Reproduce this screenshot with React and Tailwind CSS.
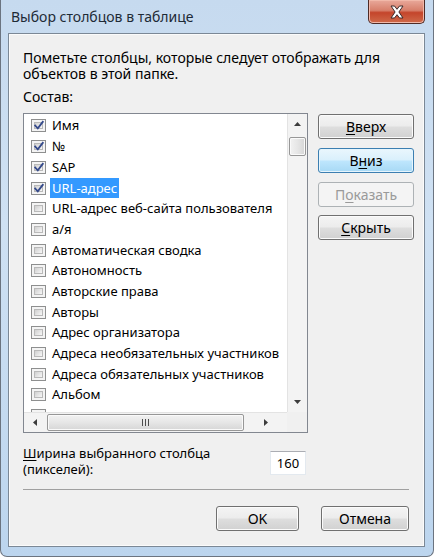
import React from 'react'

const items = [
  { label: 'Имя', checked: true },
  { label: '№', checked: true },
  { label: 'SAP', checked: true },
  { label: 'URL-адрес', checked: true, selected: true },
  { label: 'URL-адрес веб-сайта пользователя' },
  { label: 'а/я' },
  { label: 'Автоматическая сводка' },
  { label: 'Автономность' },
  { label: 'Авторские права' },
  { label: 'Авторы' },
  { label: 'Адрес организатора' },
  { label: 'Адреса необязательных участников' },
  { label: 'Адреса обязательных участников' },
  { label: 'Альбом' },
  { label: '' },
]

const CheckBox = ({ checked }) => (
  <div className="relative w-[15px] h-[13px] shrink-0 border border-[#8e8f8f] bg-[#f4f4f4] p-[2px]">
    <div className="w-full h-full border border-[#b9b9b9] bg-[linear-gradient(135deg,#d0d0d0,#f7f7f7)]" />
    {checked && (
      <svg className="absolute left-[1px] top-[0px]" width="12" height="11" viewBox="0 0 12 11">
        <path d="M2.2 5.5 L4.8 8.4 L9.8 1.8" fill="none" stroke="#34498a" strokeWidth="1.8" strokeLinecap="square" />
      </svg>
    )}
  </div>
)

const Arrow = ({ dir }) => {
  const d = {
    up: 'M0 4 L3.5 0 L7 4 Z',
    down: 'M0 0 L3.5 4 L7 0 Z',
    left: 'M4 0 L0 3.5 L4 7 Z',
    right: 'M0 0 L4 3.5 L0 7 Z',
  }[dir]
  const vertical = dir === 'up' || dir === 'down'
  return (
    <svg width={vertical ? 7 : 4} height={vertical ? 4 : 7} viewBox={vertical ? '0 0 7 4' : '0 0 4 7'}>
      <path d={d} fill="#3c3c3c" />
    </svg>
  )
}

const Button = ({ children, kind = 'normal', className = '' }) => {
  const styles = {
    normal:
      'border-[#707070] text-black bg-[linear-gradient(to_bottom,#f4f4f4_0%,#ececec_48%,#dedede_52%,#d1d1d1_100%)] shadow-[inset_0_0_0_1px_#fbfbfb]',
    focus:
      'border-[#3c7fb1] text-black bg-[linear-gradient(to_bottom,#eaf6fd_0%,#d9f0fc_48%,#bee6fd_52%,#a7d9f5_100%)] shadow-[inset_0_0_0_1px_#e6f5fd]',
    disabled: 'border-[#adb2b5] text-[#9a9a9a] bg-[#f4f4f4]',
  }[kind]
  return (
    <div className={`h-[25px] rounded-[3px] border flex items-center justify-center text-[14px] leading-none ${styles} ${className}`}>
      {children}
    </div>
  )
}

export default function App() {
  return (
    <div className="w-[434px] h-[557px] overflow-hidden flex flex-col rounded-b-[7px] border-x border-b border-[#6b7480] bg-[linear-gradient(to_bottom,#c6daef,#cfe1f3_40%,#bcd5ee)] font-['Noto_Sans',sans-serif] text-black">
      {/* Title bar */}
      <div className="h-[33px] flex justify-between items-start pl-[10px] pr-[8px] shrink-0">
        <div className="mt-[9px] text-[14px] leading-[16px] text-[#1e2a36]">Выбор столбцов в таблице</div>
        <div className="w-[57px] h-[24px] rounded-b-[5px] border border-t-0 border-[#4e2b26] flex items-center justify-center bg-[linear-gradient(to_bottom,#e9a99b_0%,#d77f6b_45%,#c4452b_55%,#cf6a4a_100%)] shadow-[inset_0_0_0_1px_#f1b8a9]">
          <svg width="16" height="14" viewBox="0 0 16 14">
            <path
              d="M2 1 H5.5 L8 4.3 L10.5 1 H14 L9.9 7 L14 13 H10.5 L8 9.7 L5.5 13 H2 L6.1 7 Z"
              fill="#ffffff"
              stroke="#3b2a2a"
              strokeWidth="1"
              strokeLinejoin="round"
            />
          </svg>
        </div>
      </div>

      {/* Client area */}
      <div className="ml-[7px] mr-[8px] h-[514px] border border-[#7b8896] bg-[#f0f0f0] shadow-[inset_0_0_0_1px_#fbfbfb] flex flex-col pl-[14px] text-[14px]">
        <p className="mt-[16px] leading-[16px] w-[380px]">
          Пометьте столбцы, которые следует отображать для объектов в этой папке.
        </p>
        <div className="mt-[7px] leading-[16px]">Состав:</div>

        <div className="mt-[8px] flex">
          {/* List box */}
          <div className="w-[285px] h-[320px] border border-[#828790] bg-white grid grid-cols-[1fr_20px] grid-rows-[1fr_20px]">
            <div className="overflow-hidden pt-[1.6px] text-[13px]">
              {items.map((it, i) => (
                <div key={i} className="h-[20.7px] flex items-center pl-[7px] whitespace-nowrap">
                  <CheckBox checked={it.checked} />
                  <span
                    className={`ml-[4px] px-[2px] h-[20px] flex items-center leading-none ${
                      it.selected ? 'bg-[#3399ff] text-white' : ''
                    }`}
                  >
                    {it.label}
                  </span>
                </div>
              ))}
            </div>

            {/* Vertical scrollbar */}
            <div className="border-l border-[#e3e3e3] bg-[#f3f3f3] flex flex-col items-center">
              <div className="h-[20px] w-full flex items-center justify-center">
                <Arrow dir="up" />
              </div>
              <div className="mt-[3px] w-[17px] h-[19px] rounded-[2px] border border-[#979797] bg-[linear-gradient(to_right,#f2f2f2,#e6e6e6_50%,#d6d6d6)] shadow-[inset_0_0_0_1px_#fafafa]" />
              <div className="flex-1" />
              <div className="h-[20px] w-full flex items-center justify-center">
                <Arrow dir="down" />
              </div>
            </div>

            {/* Horizontal scrollbar */}
            <div className="border-t border-[#e3e3e3] bg-[#f3f3f3] flex items-center">
              <div className="w-[22px] h-full flex items-center justify-center">
                <Arrow dir="left" />
              </div>
              <div className="ml-[1px] w-[197px] h-[17px] rounded-[2px] border border-[#979797] bg-[linear-gradient(to_bottom,#f2f2f2,#e6e6e6_50%,#d6d6d6)] shadow-[inset_0_0_0_1px_#fafafa] flex items-center justify-center gap-[2px]">
                <div className="w-[1px] h-[7px] bg-[#4d4d4d]" />
                <div className="w-[1px] h-[7px] bg-[#4d4d4d]" />
                <div className="w-[1px] h-[7px] bg-[#4d4d4d]" />
              </div>
              <div className="flex-1 h-full flex items-center justify-center">
                <Arrow dir="right" />
              </div>
            </div>
            <div className="bg-[#f0f0f0]" />
          </div>

          {/* Buttons */}
          <div className="ml-[10px] w-[96px] pt-[1px] flex flex-col gap-[9px]">
            <Button>
              <span className="underline underline-offset-2">В</span>верх
            </Button>
            <Button kind="focus">
              В<span className="underline underline-offset-2">н</span>из
            </Button>
            <Button kind="disabled">
              П<span className="underline underline-offset-2">о</span>казать
            </Button>
            <Button className="-mt-[1px]">
              <span className="underline underline-offset-2">С</span>крыть
            </Button>
          </div>
        </div>

        {/* Column width */}
        <div className="mt-[12px] flex items-start">
          <div className="w-[247px] text-[13px] leading-[16px]">
            <div>
              <span className="underline underline-offset-2">Ш</span>ирина выбранного столбца
            </div>
            <div>(пикселей):</div>
          </div>
          <div className="mt-[6px] w-[36px] h-[24px] bg-white border border-[#e3e9ef] border-t-[#abadb3] flex items-center justify-center text-[13px] leading-none">
            160
          </div>
        </div>

        <div className="mt-[12px] w-[386px] h-[1px] bg-[#a0a0a0]" />

        <div className="mt-[16px] flex justify-end pr-[15px] gap-[22px]">
          <Button className="w-[83px]">OK</Button>
          <Button className="w-[88px]">Отмена</Button>
        </div>
      </div>
    </div>
  )
}
